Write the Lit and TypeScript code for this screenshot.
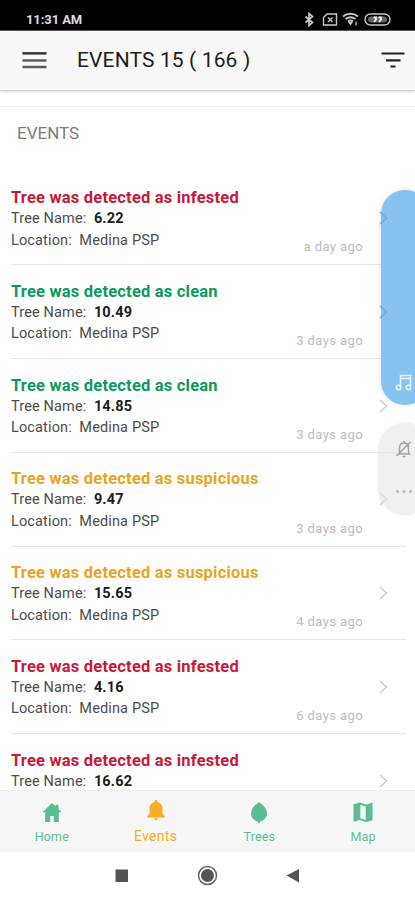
import { LitElement, html, css, svg, nothing } from "lit";
import { customElement } from "lit/decorators.js";

type Status = "infested" | "clean" | "suspicious";
interface TreeEvent { status: Status; tree: string; ago?: string; location?: string; }

const EVENTS: TreeEvent[] = [
  { status: "infested", tree: "6.22", ago: "a day ago", location: "Medina PSP" },
  { status: "clean", tree: "10.49", ago: "3 days ago", location: "Medina PSP" },
  { status: "clean", tree: "14.85", ago: "3 days ago", location: "Medina PSP" },
  { status: "suspicious", tree: "9.47", ago: "3 days ago", location: "Medina PSP" },
  { status: "suspicious", tree: "15.65", ago: "4 days ago", location: "Medina PSP" },
  { status: "infested", tree: "4.16", ago: "6 days ago", location: "Medina PSP" },
  { status: "infested", tree: "16.62" },
];

const TABS = [
  { label: "Home", active: false, icon: svg`<path d="M10 1 .5 10.200h2.700V20h5v-6h3.600v6h5v-9.800h2.700L16.500 7V2.800h-2.800v1.700z"/>` },
  { label: "Events", active: true, icon: svg`<path d="M10 0c-.9 0-1.500.6-1.500 1.400v.5C5.600 2.600 3.600 5 3.600 8v5.300L1.300 16.200v1.300h17.400v-1.300L16.400 13.300V8c0-3-2-5.400-4.900-6.100v-.5C11.500.6 10.900 0 10 0zM8 18.200h4c0 1.200-.9 2-2 2s-2-.8-2-2z"/>` },
  { label: "Trees", active: false, icon: svg`<path d="M10 0C9 1.500 6 2.600 4.300 5.200 2.800 7.500 2 9.500 2 12c0 3.200 2.600 5.800 5.800 7.300L9.300 20v1.600h1.400V20l1.500-.7C15.400 17.800 18 15.200 18 12c0-2.500-.8-4.500-2.300-6.800C14 2.600 11 1.500 10 0z"/>` },
  { label: "Map", active: false, icon: svg`<path fill-rule="evenodd" d="M.5 2.300 6.800.5l6.400 2L19.500.7v17.500L13.200 20l-6.400-2L.5 19.800zM7.300 2.900v13.400l5.400 1.700V4.600z"/>` },
];

@customElement("app-root")
export class AppRoot extends LitElement {
  static styles = css`
    :host { display: flex; flex-direction: column; position: relative; width: 415px; height: 900px; overflow: hidden; background: #fff; color: #222; font-family: Roboto, sans-serif; }
    * { box-sizing: border-box; }
    svg { display: block; flex: none; }
    .status { height: 31px; flex: none; background: #000; color: #ddd; display: flex; align-items: flex-end; padding: 0 24px 3px 26px; border-bottom: 1px solid #555; }
    .clock { flex: 1; font-size: 13px; font-weight: 700; line-height: 14px; letter-spacing: -0.1px; }
    .header { height: 60px; flex: none; background: #f8f8f8; border-bottom: 1px solid #d3d3d3; box-shadow: 0 1px 3px #0002; display: flex; align-items: center; padding: 0 10px 1px 22px; }
    .title { flex: 1; padding-left: 30px; font-size: 21px; line-height: 26px; letter-spacing: .13px; white-space: pre; color: #1c1c1c; }
    .section { height: 65.500px; flex: none; margin-top: 15px; padding: 16px 17px 0; border-top: 1.500px solid #ececec; font-size: 17px; line-height: 20px; color: #7c7c7c; }
    .list { flex: 1; min-height: 0; overflow: hidden; padding: 0 9px 0 11px; }
    .row { height: 93.75px; border-bottom: 1px solid #e6e6e6; display: flex; padding-top: 16.600px; }
    .info { flex: 1; }
    .name { font-size: 16.500px; line-height: 20px; font-weight: 700; letter-spacing: .2px; white-space: nowrap; }
    .infested { color: #c8193a; }
    .clean { color: #0b9a5d; }
    .suspicious { color: #eaa51c; }
    .line { font-size: 14.500px; line-height: 21.500px; letter-spacing: .14px; white-space: pre; color: #4c4c4c; }
    .line b { color: #1c1c1c; font-weight: 700; }
    .ago { align-self: flex-end; padding-bottom: 9px; font-size: 13px; line-height: 16px; color: #bdbdbd; letter-spacing: .4px; white-space: nowrap; }
    .chev { margin: 23px 18px 0 16px; }
    .tabs { height: 62px; flex: none; background: #f7f7f7; border-top: 1px solid #efefef; display: flex; }
    .tab { flex: 1; display: flex; flex-direction: column; align-items: center; padding-top: 10.500px; color: #59be8d; font-size: 12.500px; line-height: 16px; letter-spacing: .15px; gap: 5px; }
    .tab.active { color: #fdab22; font-size: 14px; padding-top: 9px; gap: 6px; letter-spacing: .3px; }
    .system { height: 48px; flex: none; display: flex; align-items: center; padding-left: 115px; }
    .volume, .mute { position: absolute; display: flex; flex-direction: column; justify-content: flex-end; }
    .volume { left: 381px; top: 190px; width: 48px; height: 215px; border-radius: 24px; background: #87c3f0; box-shadow: 0 0 5px #0002; padding: 0 0 14px 14px; }
    .mute { left: 378px; top: 423px; height: 92px; width: 54px; border-radius: 27px; background: #e2e2e280; padding: 0 0 21px 17px; gap: 31px; box-shadow: 0 0 3px #ddd6; }
    .ghost { position: absolute; left: -2px; opacity: .2; }
    .g1 { top: 21px; }
    .g2 { top: 115px; }
  `;

  private chevron(color: string) {
    return svg`<path d="M1 1l6.500 6-6.500 6" fill="none" stroke=${color} stroke-width="1.500"/>`;
  }

  render() {
    return html`
      <div class="status">
        <span class="clock">11:31 AM</span>
        <svg width="92" height="16" viewBox="299 11 92 16" fill="none" stroke="#c8c8c8" stroke-width="1.400">
          <path d="M305.500 16.500l7 6-3.500 3v-12l3.500 3-7 6" stroke-width="1.700"/>
          <path d="M327 14h9.500v11h-13v-7.500z"/><path d="M328 17.500l4.500 4.500m0-4.500l-4.500 4.500"/>
          <path d="M343 16.500c4.500-3.600 10.500-3.600 15 0M345.500 19c3-2.200 7-2.200 10 0M348 21.300c1.500-1 3.500-1 5 0" stroke-width="2"/>
          <path d="M348 22h5l-2.500 3.500z" fill="#c8c8c8" stroke="none"/><path d="M356 21.500v4" stroke-width="1.200"/>
          <rect x="365" y="14" width="25" height="11" rx="5.500"/>
          <rect x="368" y="16.500" width="19" height="6" rx="3" fill="#666" stroke="none"/>
          <path d="M373.500 17.500h2.500v2l-2 2.500m4.500-4.500h2.500v2l-2 2.500" stroke="#eee" stroke-width="1.800"/>
        </svg>
      </div>
      <div class="header">
        <svg width="25" height="18" viewBox="0 0 25 18"><path d="M.5 2.500h24M.5 9.500h24M.5 16h24" stroke="#5c5c5c" stroke-width="2.400"/><path d="M.5 2h24" stroke="#222" stroke-width="1.200"/></svg>
        <div class="title">EVENTS 15 ( 166 )</div>
        <svg width="24" height="18" viewBox="0 0 24 18"><path d="M.5 2.500h23M5 9.300h14.500M9.500 15.500h5" stroke="#222" stroke-width="2.200"/></svg>
      </div>
      <div class="section">EVENTS</div>
      <div class="list">
        ${EVENTS.map((e) => html`
          <div class="row">
            <div class="info">
              <div class="name ${e.status}">Tree was detected as ${e.status}</div>
              <div class="line">Tree Name:  <b>${e.tree}</b></div>
              ${e.location ? html`<div class="line">Location:  ${e.location}</div>` : nothing}
            </div>
            ${e.ago ? html`<div class="ago">${e.ago}</div>` : nothing}
            <svg class="chev" width="9" height="14" viewBox="0 0 9 14">${this.chevron("#cecece")}</svg>
          </div>`)}
      </div>
      <div class="tabs">
        ${TABS.map((t) => html`
          <div class="tab ${t.active ? "active" : ""}">
            <svg width="20" height="22" viewBox="0 0 20 22" fill="currentColor">${t.icon}</svg>
            <span>${t.label}</span>
          </div>`)}
      </div>
      <div class="system">
        <svg width="190" height="24" viewBox="115 864 190 24" fill="#555">
          <rect x="115.500" y="869.500" width="12.500" height="12.500"/>
          <circle cx="207.500" cy="875.500" r="6.500"/><circle cx="207.500" cy="875.500" r="9" fill="none" stroke="#666" stroke-width="1.500"/>
          <path d="M286.500 875.500L299 869v13.500z"/>
        </svg>
      </div>
      <div class="volume">
        <svg class="ghost g1" width="9" height="14" viewBox="0 0 9 14">${this.chevron("#334")}</svg>
        <svg class="ghost g2" width="9" height="14" viewBox="0 0 9 14">${this.chevron("#334")}</svg>
        <svg width="18" height="17" viewBox="0 0 18 17" fill="none" stroke="#e4f2fc" stroke-width="1.600"><path d="M5.500 13V1.500h10V13M5.500 4.500h10"/><circle cx="3.500" cy="13.500" r="2.200"/><circle cx="13.500" cy="13.500" r="2.200"/></svg>
      </div>
      <div class="mute">
        <svg width="18" height="18" viewBox="0 0 18 18" fill="none" stroke="#a0a0a0" stroke-width="1.500"><path d="M3 14h12.500M4.500 14V8c0-3 1.800-5 4.500-5s4.500 2 4.500 5v6M9 1v2M7.500 16.500h3M1.500 16L15.500 2"/></svg>
        <svg width="18" height="5" viewBox="0 0 18 5" fill="#b8b8b8"><circle cx="2.500" cy="2.500" r="1.500"/><circle cx="9" cy="2.500" r="1.500"/><circle cx="15.500" cy="2.500" r="1.500"/></svg>
      </div>
    `;
  }
}
